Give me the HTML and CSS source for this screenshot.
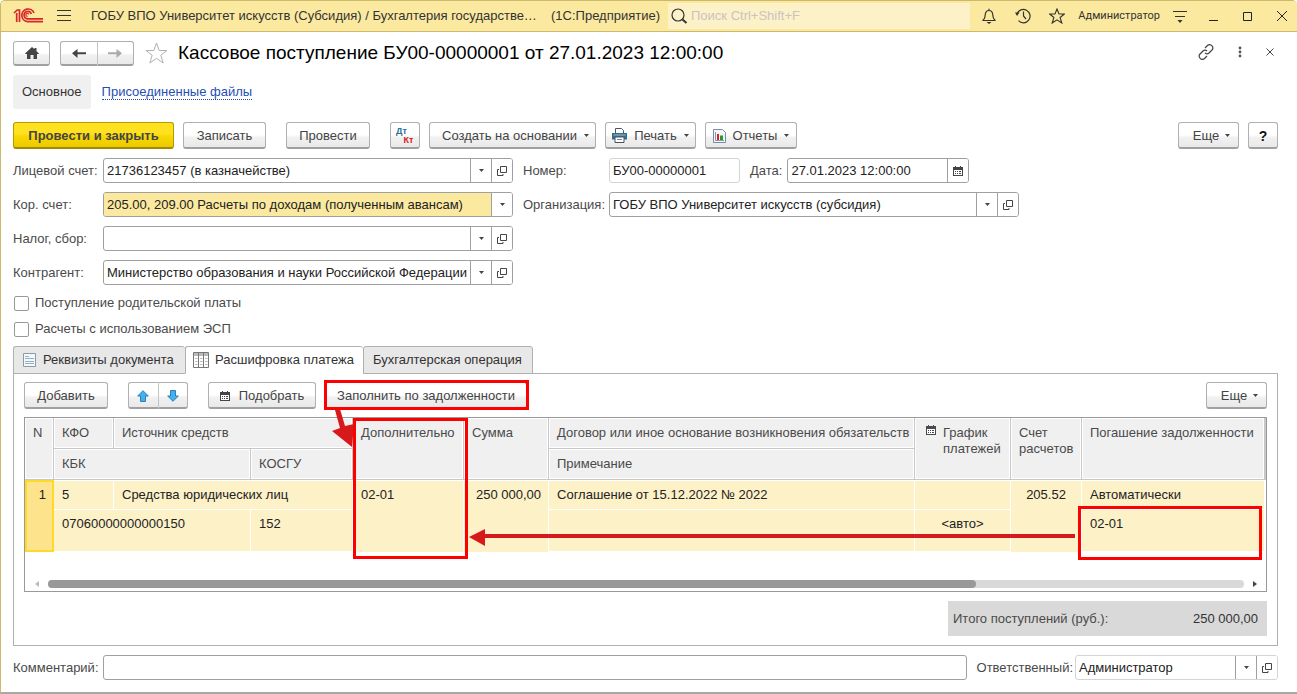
FILE: index.html
```html
<!DOCTYPE html>
<html lang="ru">
<head>
<meta charset="utf-8">
<title>Кассовое поступление БУ00-00000001</title>
<link rel="stylesheet" href="styles.css">
</head>
<body>
<svg class="defs" aria-hidden="true">
  <symbol id="i-caret" viewBox="0 0 5 3"><path d="M0 0h5L2.500 3z" fill="currentColor"/></symbol>
  <symbol id="i-open" viewBox="0 0 10 10"><path d="M3.500 .5h6v6h-6zM2 3.500H.5v6h5.500V8" fill="none" stroke="currentColor"/></symbol>
  <symbol id="i-cal" viewBox="0 0 10 10"><path d="M0 1h2V0h1v1h4V0h1v1h2v9H0z" fill="currentColor"/><path d="M1 4h8v5H1z" fill="#fff"/><path d="M2 5.500h1M4 5.500h1M6 5.500h2M2 7.500h1M4 7.500h1M6 7.500h2" stroke="currentColor"/></symbol>
</svg>
<div class="window">
  <header class="titlebar">
    <svg class="logo" width="30" height="16" viewBox="0 0 30 16" fill="none" stroke="#d8262c" stroke-width="1.700"><path d="M1 5 4.200 2H6.500V14M3.700 5v9"/><path d="M21 5A6.300 6.300 0 1 0 14.500 13.600H30" /><path d="M18.300 6a3.700 3.700 0 1 0-3.800 4.800H30"/><path d="M15.800 6.500a1.500 1.500 0 1 0-1.300 1.800" stroke-width="1.200"/></svg>
    <button class="flat" aria-label="Меню"><svg width="14" height="12" viewBox="0 0 14 12"><path d="M0 .5h14M0 5.500h14M0 10.500h14" stroke="#333"/></svg></button>
    <span class="app-title">ГОБУ ВПО Университет искусств (Субсидия) / Бухгалтерия государстве…</span>
    <span class="app-name">(1С:Предприятие)</span>
    <label class="search">
      <svg width="17" height="17" viewBox="0 0 17 17" fill="none" stroke="#333"><circle cx="7" cy="7" r="6" stroke-width="1.200"/><path d="m11.500 11.500 4 3.500" stroke-width="2"/></svg>
      <input type="search" aria-label="Поиск" placeholder="Поиск Ctrl+Shift+F">
    </label>
    <div class="tools">
      <button class="flat" aria-label="Уведомления"><svg width="16" height="16" viewBox="0 0 16 16" fill="none" stroke="#333" stroke-width="1.200"><path d="M1.500 12.500h13c-2-1-2.500-3-2.700-5.500C11.600 4 10.300 2.500 8 2.500S4.400 4 4.200 7c-.2 2.500-.7 4.500-2.700 5.500zM8 2.500V.8"/><path d="M5.500 14h5L8 16z" fill="#333" stroke="none"/></svg></button>
      <button class="flat" aria-label="История"><svg width="16" height="16" viewBox="0 0 16 16" fill="none" stroke="#333" stroke-width="1.200"><path d="M2 6A6.700 6.700 0 1 1 3.500 12.700M8.500 3.500V8l2.500 3"/><path d="M0 4.500h4.500L2 8z" fill="#333" stroke="none"/></svg></button>
      <button class="flat" aria-label="Избранное"><svg width="16" height="16" viewBox="0 0 16 16" fill="none" stroke="#333" stroke-width="1.100"><path d="m8 1 2 5h5.300l-4.200 3.500L12.800 15 8 11.800 3.200 15l1.700-5.500L.7 6H6z"/></svg></button>
      <a class="user" href="#">Администратор</a>
      <button class="flat" aria-label="Настройки"><svg width="14" height="13" viewBox="0 0 14 13"><path d="M0 1.500h14M2 6.500h10" stroke="#333" stroke-width="1.200"/><path d="M4.500 10h5L7 13z" fill="#333"/></svg></button>
    </div>
    <div class="winbtns">
      <button class="flat" aria-label="Свернуть"><svg width="10" height="10" viewBox="0 0 10 10"><path d="M0 9.500h9" stroke="#222"/></svg></button>
      <button class="flat" aria-label="Развернуть"><svg width="10" height="10" viewBox="0 0 10 10"><path d="M.5 1.500h8v8h-8z" fill="none" stroke="#222"/></svg></button>
      <button class="flat" aria-label="Закрыть"><svg width="10" height="10" viewBox="0 0 10 10"><path d="m0 0 10 10M10 0 0 10" stroke="#222"/></svg></button>
    </div>
  </header>

  <main class="form">
    <div class="heading">
      <button class="btn home" aria-label="Начальная страница"><svg width="14" height="12" viewBox="0 0 14 12"><path d="M7 0 9.500 2.300V1h2v3.200L14 6.500 13.500 7H12v5H8.500V8h-3v4H2V7H.5L0 6.500z" fill="#444"/></svg></button>
      <div class="pair">
        <button class="btn" aria-label="Назад"><svg width="14" height="9" viewBox="0 0 14 9"><path d="M14 3.300v2H5.500V9L0 4.300 5.500 0v3.300z" fill="#444"/></svg></button>
        <button class="btn" aria-label="Вперед"><svg width="14" height="9" viewBox="0 0 14 9"><path d="M0 3.300v2h8.500V9L14 4.300 8.500 0v3.300z" fill="#aaa"/></svg></button>
      </div>
      <button class="flat star" aria-label="В избранное"><svg width="23" height="22" viewBox="0 0 23 22" fill="none" stroke="#aeb2b5"><path d="m11.500 1 2.700 7.500H22l-6.200 4.700 2.400 7.800-6.700-4.700L4.800 21l2.400-7.800L1 8.500h7.800z"/></svg></button>
      <h1>Кассовое поступление БУ00-00000001 от 27.01.2023 12:00:00</h1>
      <div class="heading-tools">
        <button class="flat" aria-label="Ссылка"><svg width="16" height="16" viewBox="0 0 16 16" fill="none" stroke="#444" stroke-width="1.200"><path d="m7 4 2.500-2.500c3-2.500 7 1.500 4.500 4.500l-3 3c-1.300 1.200-3 1-4-.2M9 12l-2.500 2.500C3.500 17-.5 13 2 10l3-3c1.300-1.200 3-1 4 .2" /></svg></button>
        <button class="flat" aria-label="Действия"><svg width="4" height="12" viewBox="0 0 4 12" fill="#555"><circle cx="2" cy="2" r="1.400"/><circle cx="2" cy="6" r="1.400"/><circle cx="2" cy="10" r="1.400"/></svg></button>
        <button class="flat" aria-label="Закрыть форму"><svg width="8" height="8" viewBox="0 0 8 8"><path d="m.5.5 7 7m0-7-7 7" stroke="#444"/></svg></button>
      </div>
    </div>

    <nav class="nav">
      <a class="current" href="#">Основное</a>
      <a class="link" href="#">Присоединенные файлы</a>
    </nav>

    <div class="toolbar">
      <button class="btn primary">Провести и закрыть</button>
      <button class="btn write">Записать</button>
      <button class="btn post">Провести</button>
      <button class="btn dtkt" aria-label="Проводки"><span class="dt">Дт</span><span class="kt">Кт</span></button>
      <button class="btn create">Создать на основании<svg class="caret"><use href="#i-caret"/></svg></button>
      <button class="btn print"><svg width="15" height="15" viewBox="0 0 15 15"><path d="M3.500 5V.5h6l2 2V5" fill="#fff" stroke="#456" /><path d="M0 5h15v6.500H0z" fill="#3c6a8c"/><path d="M1.500 7h12" stroke="#9fbdd0"/><path d="M3 9h9v5.500H3z" fill="#fff" stroke="#456"/><path d="M5 11.500h5" stroke="#789"/></svg>Печать<svg class="caret"><use href="#i-caret"/></svg></button>
      <button class="btn reports"><svg width="13" height="14" viewBox="0 0 13 14"><path d="M.5.500h9l3 3v10H.5z" fill="#f5f8fa" stroke="#7a8c99"/><path d="M2.500 3v8.500h8.500" fill="none" stroke="#89a"/><path d="M4 5h2v6H4z" fill="#e02020"/><path d="M7 6.500h3V11H7z" fill="#2a9a30"/></svg>Отчеты<svg class="caret"><use href="#i-caret"/></svg></button>
      <button class="btn more">Еще<svg class="caret"><use href="#i-caret"/></svg></button>
      <button class="btn help" aria-label="Справка">?</button>
    </div>

    <div class="fields">
      <label for="account">Лицевой счет:</label>
      <div class="field"><input id="account" value="21736123457 (в казначействе)"><button aria-label="Выбрать"><svg class="caret"><use href="#i-caret"/></svg></button><button aria-label="Открыть"><svg class="ic"><use href="#i-open"/></svg></button></div>
      <label for="number">Номер:</label>
      <div class="pairline">
        <div class="field pale number"><input id="number" value="БУ00-00000001"></div>
        <label for="date">Дата:</label>
        <div class="field date"><input id="date" value="27.01.2023 12:00:00"><button aria-label="Календарь"><svg class="ic"><use href="#i-cal"/></svg></button></div>
      </div>

      <label for="corr">Кор. счет:</label>
      <div class="field accent"><select id="corr"><option>205.00, 209.00 Расчеты по доходам (полученным авансам)</option></select><button aria-label="Выбрать"><svg class="caret"><use href="#i-caret"/></svg></button></div>
      <label for="org">Организация:</label>
      <div class="field org"><input id="org" value="ГОБУ ВПО Университет искусств (субсидия)"><button aria-label="Выбрать"><svg class="caret"><use href="#i-caret"/></svg></button><button aria-label="Открыть"><svg class="ic"><use href="#i-open"/></svg></button></div>

      <label for="tax">Налог, сбор:</label>
      <div class="field"><input id="tax" value=""><button aria-label="Выбрать"><svg class="caret"><use href="#i-caret"/></svg></button><button aria-label="Открыть"><svg class="ic"><use href="#i-open"/></svg></button></div>
      <span></span><span></span>

      <label for="party">Контрагент:</label>
      <div class="field"><input id="party" value="Министерство образования и науки Российской Федерации"><button aria-label="Выбрать"><svg class="caret"><use href="#i-caret"/></svg></button><button aria-label="Открыть"><svg class="ic"><use href="#i-open"/></svg></button></div>
    </div>

    <div class="checks">
      <label><input type="checkbox">Поступление родительской платы</label>
      <label><input type="checkbox">Расчеты с использованием ЭСП</label>
    </div>

    <div class="tabs" role="tablist">
      <button class="tab-details" role="tab" aria-selected="false"><svg width="13" height="14" viewBox="0 0 13 14"><path d="M.5.500h12v13H.5z" fill="#f4f8fa" stroke="#8a9ba6"/><path d="M2 3.500h4M2 5.500h9M2 8.500h9M2 10.500h9" stroke="#8cb4c6"/></svg>Реквизиты документа</button>
      <button class="tab-lines" role="tab" aria-selected="true"><svg width="16" height="16" viewBox="0 0 16 16"><path d="M.5.500h15v15H.5z" fill="#fff" stroke="#777"/><path d="M1 1h14v3H1z" fill="#bbb"/><path d="M5.500 1v14M10.500 1v14" stroke="#777"/><path d="M2 6.500h2.500M2 9.500h2.500M2 12.500h2.500M7 6.500h2.500M7 9.500h2.500M7 12.500h2.500M12 6.500h2.500M12 9.500h2.500M12 12.500h2.500" stroke="#bbb"/></svg>Расшифровка платежа</button>
      <button class="tab-entry" role="tab" aria-selected="false">Бухгалтерская операция</button>
    </div>

    <section class="panel">
      <div class="toolbar">
        <button class="btn add">Добавить</button>
        <div class="pair move">
          <button class="btn" aria-label="Вверх"><svg width="12" height="12" viewBox="0 0 12 12"><path d="M6 .7 11.300 6H8.500v5.500h-5V6H.7z" fill="#45b0ee" stroke="#2b7fb5"/></svg></button>
          <button class="btn" aria-label="Вниз"><svg width="12" height="12" viewBox="0 0 12 12"><path d="M6 11.300 11.300 6H8.500V.5h-5V6H.7z" fill="#45b0ee" stroke="#2b7fb5"/></svg></button>
        </div>
        <button class="btn pick"><svg class="ic"><use href="#i-cal"/></svg>Подобрать</button>
        <button class="btn fill">Заполнить по задолженности</button>
        <button class="btn more">Еще<svg class="caret"><use href="#i-caret"/></svg></button>
      </div>

      <div class="grid">
        <table>
          <colgroup><col class="c-n"><col class="c-kfo"><col class="c-src"><col class="c-kosgu"><col class="c-add"><col class="c-sum"><col class="c-deal"><col class="c-plan"><col class="c-acc"><col class="c-debt"><col></colgroup>
          <thead>
            <tr><th rowspan="2">N</th><th>КФО</th><th colspan="2">Источник средств</th><th rowspan="2">Дополнительно</th><th rowspan="2">Сумма</th><th>Договор или иное основание возникновения обязательств</th><th rowspan="2"><div class="plan"><svg class="ic"><use href="#i-cal"/></svg><span>График платежей</span></div></th><th rowspan="2">Счет расчетов</th><th rowspan="2">Погашение задолженности</th><th></th></tr>
            <tr><th colspan="2">КБК</th><th>КОСГУ</th><th>Примечание</th><th></th></tr>
          </thead>
          <tbody>
            <tr><td class="current" rowspan="2">1</td><td>5</td><td colspan="2">Средства юридических лиц</td><td rowspan="2">02-01</td><td class="num" rowspan="2">250 000,00</td><td>Соглашение от 15.12.2022 № 2022</td><td></td><td class="mid" rowspan="2">205.52</td><td>Автоматически</td><td></td></tr>
            <tr><td colspan="2">07060000000000150</td><td>152</td><td></td><td class="mid">&lt;авто&gt;</td><td>02-01</td><td></td></tr>
          </tbody>
        </table>
        <div class="scroll" aria-hidden="true"><i class="left"></i><div class="track"><div class="thumb"></div></div><i class="right"></i></div>
        <svg class="notes" width="1243" height="212" viewBox="0 0 1243 212" aria-hidden="true">
          <g fill="none" stroke="#fe0000" stroke-width="3"><path d="M301.500 1.500h202v27h-202zM330.500 39.500h112v138h-112zM1055.500 127.500h181v51h-181z"/></g>
          <g fill="#d7191c"><path d="m311 30 5-1 5 17 9-2-2 23-20-16 8-3z"/><path d="M1051 154v4H461v8l-16-9 16-8v5z"/></g>
        </svg>
      </div>

      <dl class="total"><dt>Итого поступлений (руб.):</dt><dd>250 000,00</dd></dl>
    </section>

    <div class="footer">
      <label for="comment">Комментарий:</label>
      <div class="field comment"><input id="comment" value=""></div>
      <label for="resp">Ответственный:</label>
      <div class="field pale resp"><input id="resp" value="Администратор"><button aria-label="Выбрать"><svg class="caret"><use href="#i-caret"/></svg></button><button aria-label="Открыть"><svg class="ic"><use href="#i-open"/></svg></button></div>
    </div>
  </main>
</div>
</body>
</html>
```
FILE: styles.css
```css
* { box-sizing: border-box; }
body, h1, dl, dd { margin: 0; }
body {
  font: 13px/16px "Liberation Sans", Arial, sans-serif;
  color: #4a4a4a;
  background: #fff;
}
button, input, select { font: inherit; color: inherit; margin: 0; }
button { cursor: pointer; }
svg { flex: none; }
.defs { position: absolute; width: 0; height: 0; }
.window {
  min-height: 100vh;
  display: flex;
  flex-direction: column;
  border: 1px solid #cdb96b;
  border-width: 1px 0 0 1px;
  border-bottom: 2px solid #a8a8a8;
  border-radius: 5px 5px 0 0;
}
.flat { border: 0; background: none; padding: 0; display: flex; align-items: center; justify-content: center; }
.caret { width: 5px; height: 3px; }
.ic { width: 10px; height: 10px; }

/* Title bar */
.titlebar {
  display: flex;
  align-items: center;
  height: 31px;
  padding: 0 10px 0 12px;
  background: #fbe9a0;
  border-bottom: 1px solid #cdb96b;
  border-radius: 4px 4px 0 0;
  color: #333;
}
.logo { margin-right: 14px; }
.app-title { margin-left: 20px; white-space: nowrap; flex: 0 0 460px; overflow: hidden; }
.app-name { flex: none; width: 117px; white-space: nowrap; }
.search {
  display: flex;
  align-items: center;
  gap: 3px;
  flex: 1;
  height: 26px;
  padding: 0 3px;
  background: #fdf1c8;
}
.search input { flex: 1; min-width: 0; border: 0; padding: 0; background: none; outline: 0; }
.search input::placeholder { color: #c9c3c3; opacity: 1; }
.tools { display: flex; align-items: center; gap: 18px; margin: 0 22px 0 11px; }
.user { color: #333; text-decoration: none; font: 11px/16px Roboto, sans-serif; margin-left: -5px; margin-right: -5px; }
.winbtns { display: flex; gap: 24px; }

/* Form */
.form { padding: 8px 19px 10px 12px; flex: 1; }
.btn {
  display: flex;
  align-items: center;
  justify-content: center;
  height: 27px;
  padding: 1px 6px 0;
  border: 1px solid #b0b0b0;
  border-bottom: 2px solid #a0a0a0;
  border-radius: 3px;
  background: linear-gradient(#fff 50%, #f1f1f1 60%, #e9e9e9);
  color: #444;
  white-space: nowrap;
}
.heading { display: flex; align-items: center; height: 26px; }
.heading .btn { height: 25px; }
.home { width: 37px; }
.pair { display: flex; }
.pair .btn { flex: 1; }
.pair .btn:first-child { border-radius: 3px 0 0 3px; border-right-width: 0; }
.pair .btn:last-child { border-radius: 0 3px 3px 0; border-left-color: #c4c4c4; }
.heading .pair { width: 74px; margin: 0 11px 0 10px; }
.heading h1 { margin-left: 10px; font-size: 19px; line-height: 24px; font-weight: 400; color: #000; flex: 1; white-space: nowrap; }
.heading-tools { display: flex; align-items: center; gap: 24px; padding: 0 4px 2px 0; }
.nav { display: flex; align-items: center; gap: 11px; margin: 9px 0 13px; }
.nav .current { padding: 9px; background: #f0f0f0; border-radius: 3px; color: #333; text-decoration: none; }
.link { color: #1f4fb5; text-decoration: none; border-bottom: 1px dotted #1f4fb5; line-height: 14px; }
.toolbar { display: flex; gap: 9px; }
.toolbar .more { margin-left: auto; width: 61px; gap: 6px; padding-left: 12px; }
.primary { width: 161px; font-weight: 700; border-color: #b39c00; border-bottom-color: #a08c00; background: linear-gradient(#ffe11f 45%, #f8d900 55%, #ecc900); }
.write { width: 83px; margin-right: 11px; }
.post { width: 84px; margin-right: 11px; }
.dtkt { width: 30px; flex-direction: column; font: 700 9px/9px "Liberation Sans", Arial, sans-serif; }
.dt { color: #2d6f96; margin-right: 7px; }
.kt { color: #d41a1a; margin-left: 7px; }
.create { width: 167px; gap: 7px; padding-left: 12px; }
.print { width: 91px; gap: 7px; }
.reports { width: 92px; gap: 7px; }
.help { width: 30px; font-size: 14px; font-weight: 700; color: #111; }

.fields {
  display: grid;
  grid-template-columns: 80px 410px 76px minmax(0, 1fr);
  gap: 9px 10px;
  align-items: center;
  margin-top: 9px;
}
.fields label, .footer label { white-space: nowrap; }
.field { display: flex; height: 25px; border: 1px solid #a0a0a0; border-radius: 3px; background: #fff; overflow: hidden; color: #222; }
.field input, .field select { flex: 1; min-width: 0; border: 0; padding: 0 3px; background: none; outline: 0; appearance: none; }
.field button { width: 21px; border: 0; border-left: 1px solid #a0a0a0; padding: 0; background: #fff; display: flex; align-items: center; justify-content: center; color: #444; }
.field.pale { border-color: #d4d4d4; }
.accent select { background: #fbe9a0; }
.pairline { display: flex; align-items: center; }
.pairline label { margin: 0 5px 0 10px; }
.number { width: 131px; }
.date { width: 182px; }
.org { width: 410px; }

.checks { display: flex; flex-direction: column; gap: 10px; margin-top: 10px; }
.checks label { display: flex; align-items: center; gap: 6px; }
.checks input { appearance: none; width: 15px; height: 15px; margin-left: 1px; border: 1px solid #999; border-radius: 2px; background: #fff; }

/* Tabs and table */
.tabs { display: flex; margin-top: 9px; }
.tabs button {
  display: flex;
  align-items: center;
  gap: 7px;
  height: 28px;
  padding: 0 0 1px 9px;
  margin-bottom: -1px;
  border: 1px solid #b0b0b0;
  border-right-width: 0;
  border-radius: 3px 3px 0 0;
  background: #e8e8e8;
  color: #333;
  white-space: nowrap;
}
.tabs button:last-child { border-right-width: 1px; }
.tabs button[aria-selected="true"] { background: #fff; border-bottom-color: #fff; z-index: 1; padding-left: 7px; gap: 6px; }
.tab-details { width: 172px; }
.tab-lines { width: 178px; }
.tab-entry { width: 170px; }
.panel { border: 1px solid #b0b0b0; padding: 8px 10px 9px; }
.add { width: 84px; margin-right: 11px; }
.move { width: 60px; margin-right: 11px; }
.pick { width: 108px; gap: 9px; }
.fill { width: 202px; }
.grid { position: relative; display: flex; flex-direction: column; height: 175px; margin-top: 8px; border: 1px solid #999; }
.grid table { width: 100%; table-layout: fixed; border-collapse: separate; border-spacing: 0; }
.c-n { width: 29px; } .c-kfo { width: 60px; } .c-src { width: 137px; } .c-kosgu { width: 102px; }
.c-add { width: 111px; } .c-sum { width: 85px; } .c-deal { width: 366px; } .c-plan { width: 96px; }
.c-acc { width: 71px; } .c-debt { width: 183px; }
th, td { padding: 7px 0 0 8px; vertical-align: top; text-align: left; font-weight: 400; overflow: hidden; }
th { height: 31px; background: #f0f0f0; border: 1px solid #c8c8c8; border-width: 0 1px 1px 0; box-shadow: inset 0 0 0 1px #fff; }
td { height: 29px; padding-top: 6px; background: #fdf1c8; border: 1px solid #fff; border-width: 1px 1px 0 0; color: #222; }
tbody tr:last-child td { height: 43px; border-bottom-width: 1px; }
td.current { padding: 5px 6px 0 0; text-align: right; background: #fde38c; border: 2px solid #fdd92a; }
td.num { text-align: right; padding: 6px 7px 0 0; }
td.mid { text-align: center; padding-left: 0; }
th:last-child, td:last-child { padding: 0; }
.plan { display: flex; gap: 7px; padding-left: 3px; }
.scroll { display: flex; align-items: center; gap: 9px; margin: auto 9px 3px 10px; }
.track { flex: 1; height: 8px; border-radius: 4px; background: #d9d9d9; }
.thumb { width: 928px; max-width: 90%; height: 8px; border-radius: 4px; background: #999; }
.scroll i { border: 3px solid transparent; }
.scroll .left { border-right: 4px solid #bbb; border-left: 0; }
.scroll .right { border-left: 4px solid #444; border-right: 0; }
.notes { position: absolute; left: -1px; top: -38px; pointer-events: none; z-index: 2; }
.total { display: flex; align-items: center; justify-content: space-between; width: 319px; height: 35px; margin: 9px 0 0 auto; padding: 0 9px 0 5px; background: #d9d9d9; }
.total dd { color: #333; }
.footer { display: flex; align-items: center; margin-top: 9px; }
.footer label:first-child { width: 90px; }
.comment { flex: 1; margin-right: 10px; }
.resp { width: 203px; margin-left: 2px; }
```
